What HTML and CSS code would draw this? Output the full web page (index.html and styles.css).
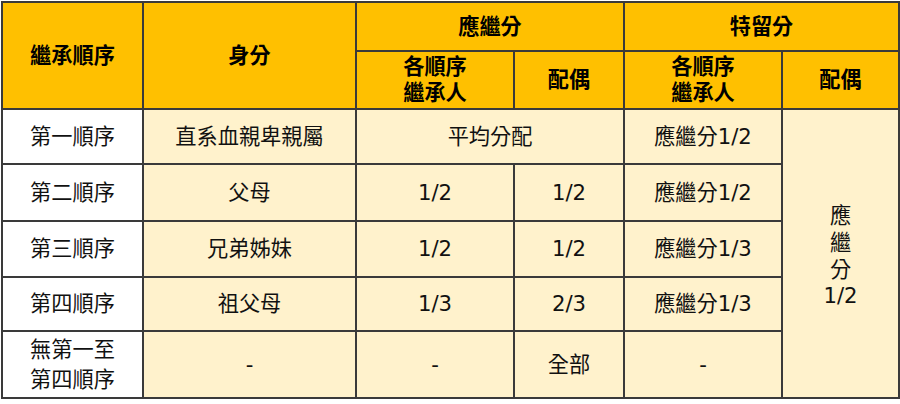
FILE: index.html
```html
<!DOCTYPE html>
<html lang="zh-Hant">
<head>
<meta charset="utf-8">
<link rel="stylesheet" href="styles.css">
</head>
<body>
<table class="inherit">
  <colgroup>
    <col class="c1"><col class="c2"><col class="c3"><col class="c4"><col class="c5"><col class="c6">
  </colgroup>
  <thead>
    <tr class="h1">
      <th rowspan="2">繼承順序</th>
      <th rowspan="2">身分</th>
      <th colspan="2">應繼分</th>
      <th colspan="2">特留分</th>
    </tr>
    <tr class="h2">
      <th class="two">各順序<br>繼承人</th>
      <th>配偶</th>
      <th class="two">各順序<br>繼承人</th>
      <th>配偶</th>
    </tr>
  </thead>
  <tbody>
    <tr class="r1">
      <td class="order">第一順序</td>
      <td>直系血親卑親屬</td>
      <td colspan="2">平均分配</td>
      <td>應繼分1/2</td>
      <td rowspan="5" class="tall">應<br>繼<br>分<br>1/2</td>
    </tr>
    <tr class="r2">
      <td class="order">第二順序</td>
      <td>父母</td>
      <td>1/2</td>
      <td>1/2</td>
      <td>應繼分1/2</td>
    </tr>
    <tr class="r3">
      <td class="order">第三順序</td>
      <td>兄弟姊妹</td>
      <td>1/2</td>
      <td>1/2</td>
      <td>應繼分1/3</td>
    </tr>
    <tr class="r4">
      <td class="order">第四順序</td>
      <td>祖父母</td>
      <td>1/3</td>
      <td>2/3</td>
      <td>應繼分1/3</td>
    </tr>
    <tr class="r5">
      <td class="order two">無第一至<br>第四順序</td>
      <td>-</td>
      <td>-</td>
      <td>全部</td>
      <td>-</td>
    </tr>
  </tbody>
</table>
</body>
</html>
```
FILE: styles.css
```css
html, body {
  margin: 0;
  padding: 0;
  background: #ffffff;
}
body {
  padding: 1px 0 0 1px;
  font-family: "DejaVu Sans", "Noto Sans CJK TC", sans-serif;
}
.inherit {
  border-collapse: collapse;
  table-layout: fixed;
  width: 897px;
  font-size: 21.2px;
  color: #111;
}
.c1 { width: 141px; }
.c2 { width: 213px; }
.c3 { width: 158px; }
.c4 { width: 110px; }
.c5 { width: 158px; }
.c6 { width: 117px; }
.inherit th,
.inherit td {
  border: 2px solid #3a3a3a;
  text-align: center;
  vertical-align: middle;
  padding: 0;
  line-height: 1.3;
  overflow: hidden;
}
.inherit th {
  background: #ffc000;
  color: #000;
  font-weight: 700;
}
.inherit td {
  background: #fff2cc;
}
.inherit td.order {
  background: #ffffff;
}
.inherit th.two { line-height: 1.22; }
.inherit td.two { line-height: 1.4; }
.inherit td.tall { line-height: 1.27; padding-top: 6px; }
.h1 { height: 49px; }
.h2 { height: 58px; }
.r1 { height: 55px; }
.r2 { height: 57px; }
.r3 { height: 56px; }
.r4 { height: 54px; }
.r5 { height: 67px; }
```
